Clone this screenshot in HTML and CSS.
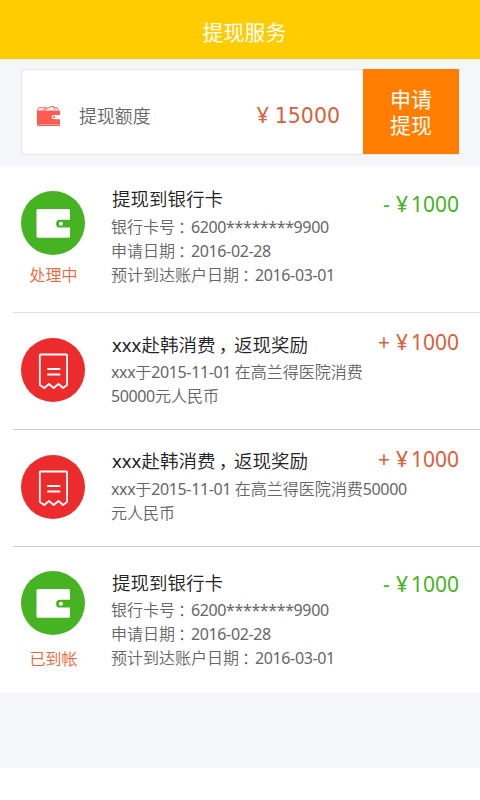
FILE: index.html
```html
<!DOCTYPE html>
<html lang="zh-CN">
<head>
<meta charset="utf-8">
<title>提现服务</title>
<link rel="stylesheet" href="styles.css">
</head>
<body>
<svg width="0" height="0" class="symbols">
  <symbol id="wallet" viewBox="0 0 64 64">
    <path fill="#fff" fill-rule="evenodd" d="M17 18H47.500Q49 18 49 19.500V28.800H39A3.900 3.900 0 0 0 39 36.600H49V45.200Q49 46.700 47.500 46.700H17Q15.500 46.700 15.500 45.200V19.500Q15.500 18 17 18Z"/>
    <circle cx="39.900" cy="32.700" r="2" fill="#fff"/>
  </symbol>
  <symbol id="receipt" viewBox="0 0 64 64">
    <path fill="none" stroke="#fff" stroke-width="1.800" stroke-linejoin="round" d="M19.500 16.500H45.300Q46.100 16.500 46.100 17.300V47L42 50L37.500 46L32.700 50L28 46L23.300 50L18.800 47V17.300Q18.800 16.500 19.500 16.500Z"/>
    <path stroke="#fff" stroke-width="2" stroke-linecap="round" d="M27 31H38.500M27 36.500H38.500"/>
  </symbol>
</svg>
<header class="header">提现服务</header>
<section class="panel">
  <div class="balance">
    <svg class="purse" viewBox="0 0 24 22">
      <path fill="none" stroke="#ff5b50" stroke-width="1" d="M.7 6V4.500Q.7 2.800 2.300 2.800H10M6 5.200L16 1L18 5M17 2.800H20L21.500 5"/>
      <path fill="#ff5b50" d="M0 5.500H22Q23 5.500 23 7V10H17Q14.500 10 14.500 12T17 14.200H23V20Q23 21 22 21H1.500Q0 21 0 19.500Z"/>
      <circle cx="17" cy="12" r="1.100" fill="#ff5b50"/>
      <path stroke="#fff" stroke-width=".4" d="M1.500 19.500H22"/>
    </svg>
    <span class="balance-label">提现额度</span>
    <span class="balance-value"><span class="yen">¥</span>15000</span>
    <button class="apply">申请<br>提现</button>
  </div>
</section>
<main class="list">
  <article class="row row-first">
    <div class="side"><svg class="badge out"><use href="#wallet"/></svg><span class="status">处理中</span></div>
    <div class="info">
      <h2>提现到银行卡</h2>
      <p>银行卡号<span class="punct">：</span><span class="num">6200********9900</span></p>
      <p>申请日期<span class="punct">：</span><span class="num">2016-02-28</span></p>
      <p>预计到达账户日期<span class="punct">：</span><span class="num">2016-03-01</span></p>
    </div>
    <div class="amount minus"><span class="sign">-</span><span class="yen">¥</span>1000</div>
  </article>
  <article class="row row-reward">
    <div class="side"><svg class="badge in"><use href="#receipt"/></svg></div>
    <div class="info">
      <h2><span class="latin">xxx</span>赴韩消费<span class="punct">，</span>返现奖励</h2>
      <p><span class="num">xxx</span>于<span class="num">2015-11-01 </span>在高兰得医院消费</p>
      <p><span class="num">50000</span>元人民币</p>
    </div>
    <div class="amount plus"><span class="sign">+</span><span class="yen">¥</span>1000</div>
  </article>
  <article class="row row-reward second">
    <div class="side"><svg class="badge in"><use href="#receipt"/></svg></div>
    <div class="info">
      <h2><span class="latin">xxx</span>赴韩消费<span class="punct">，</span>返现奖励</h2>
      <p><span class="num">xxx</span>于<span class="num">2015-11-01 </span>在高兰得医院消费<span class="num">50000</span></p>
      <p>元人民币</p>
    </div>
    <div class="amount plus"><span class="sign">+</span><span class="yen">¥</span>1000</div>
  </article>
  <article class="row row-last">
    <div class="side"><svg class="badge out"><use href="#wallet"/></svg><span class="status">已到帐</span></div>
    <div class="info">
      <h2>提现到银行卡</h2>
      <p>银行卡号<span class="punct">：</span><span class="num">6200********9900</span></p>
      <p>申请日期<span class="punct">：</span><span class="num">2016-02-28</span></p>
      <p>预计到达账户日期<span class="punct">：</span><span class="num">2016-03-01</span></p>
    </div>
    <div class="amount minus"><span class="sign">-</span><span class="yen">¥</span>1000</div>
  </article>
</main>
<div class="filler"></div>
</body>
</html>
```
FILE: styles.css
```css
* { box-sizing: border-box; }
body {
  margin: 0;
  height: 800px;
  overflow: hidden;
  background: #fff;
  font-family: "Noto Sans", "Noto Sans CJK SC", sans-serif;
  color: #666;
}
h2, p { margin: 0; font-weight: 400; white-space: nowrap; }
.symbols { display: none; }
.header {
  height: 59px;
  padding-top: 3px;
  background: #fc0;
  color: #fff;
  font-size: 21px;
  line-height: 59px;
  text-align: center;
  padding-left: 9px;
}
.panel { height: 107px; padding: 10px 21px 11px; background: #f4f6fa; }
.balance {
  display: flex;
  align-items: center;
  height: 86px;
  padding-left: 15px;
  background: #fff;
  border: 1px solid #e6e6e8;
  border-right: 0;
}
.purse { width: 24px; height: 22px; margin-top: 8px; }
.balance-label { margin: 7px 0 0 18px; font-size: 17.900px; line-height: 24px; font-weight: 350; }
.balance-value {
  display: flex;
  margin: 7px 23px 0 auto;
  color: #d8603c;
  font: 20.500px/24px "DejaVu Sans", sans-serif;
}
.balance-value .yen { width: 18px; margin-top: -1px; font-family: "Noto Sans", sans-serif; font-size: 21px; }
.apply {
  width: 96px;
  height: 85px;
  align-self: flex-start;
  margin-top: -1px;
  padding: 0 0 1px;
  border: 0;
  background: #ff7e00;
  color: #fff;
  font: 21px/26px "Noto Sans CJK SC", sans-serif;
}
.row { display: flex; position: relative; height: 117px; padding-left: 21px; padding-right: 21px; }
.row:not(.row-last)::after {
  content: "";
  position: absolute;
  left: 13px;
  right: 0;
  bottom: 0;
  height: 1px;
  background: #ccc;
}
.row-first::after { background: #e0e0e0 !important; }
.row-first { height: 147px; }
.row-last { height: 146px; }
.side { display: flex; flex-direction: column; align-items: center; width: 64px; margin-top: 25px; }
.badge { width: 64px; height: 64px; border-radius: 50%; }
.out { background: #45b322; }
.in { background: #ec2b2c; }
.status { margin: 8px 0 0 1px; font-size: 16px; line-height: 24px; color: #f26338; font-weight: 350; }
.row-last .side { margin-top: 24px; }
.row-last .status { margin-top: 12px; }
.info { margin: 19px 0 0 26px; flex: 1; min-width: 0; font-size: 16px; line-height: 24px; }
.info h2 { height: 30px; padding-left: 1px; font-size: 18.500px; line-height: 28px; color: #222; font-weight: 350; }
.info p { height: 24px; font-weight: 350; }
.row-last .info { margin-top: 22px; }
.row-last h2 { height: 29px; }
.row-reward .info { margin-top: 18px; }
.row-reward h2 { height: 29px; }
.row-reward.second .info { margin-top: 17px; }
.row-reward.second h2 { height: 30px; }
.latin { font-weight: 400; }
.num { letter-spacing: -.38px; font-weight: 400; }
.punct { padding-left: .18em; letter-spacing: -.18em; }
.amount { display: flex; height: 28px; margin-top: 24px; font-size: 21px; line-height: 28px; }
.row-reward .amount { margin-top: 15px; }
.row-last .amount { margin-top: 23px; }
.sign { width: 10px; }
.plus .sign { width: 15px; }
.amount .yen { width: 18px; text-align: center; }
.minus { color: #45b322; }
.plus { color: #e05c38; }
.filler { height: 75px; background: #f4f6fa; }
```
